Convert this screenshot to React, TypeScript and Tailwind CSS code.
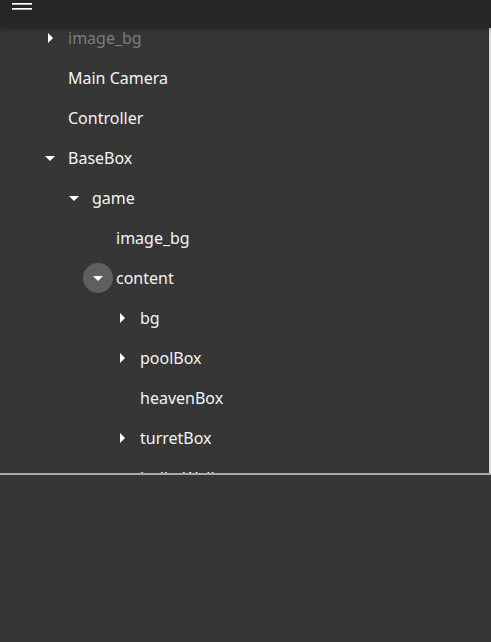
import React from 'react';

type Node = {
  label: string;
  level: number;
  arrow?: 'right' | 'down';
  faded?: boolean;
  active?: boolean;
};

const nodes: Node[] = [
  { label: 'image_bg', level: 0, arrow: 'right', faded: true },
  { label: 'Main Camera', level: 0 },
  { label: 'Controller', level: 0 },
  { label: 'BaseBox', level: 0, arrow: 'down' },
  { label: 'game', level: 1, arrow: 'down' },
  { label: 'image_bg', level: 2 },
  { label: 'content', level: 2, arrow: 'down', active: true },
  { label: 'bg', level: 3, arrow: 'right' },
  { label: 'poolBox', level: 3, arrow: 'right' },
  { label: 'heavenBox', level: 3 },
  { label: 'turretBox', level: 3, arrow: 'right' },
  { label: 'bulletWall', level: 3, arrow: 'right' },
];

const indent = ['pl-[38px]', 'pl-[62px]', 'pl-[86px]', 'pl-[110px]'];

function Arrow({ dir }: { dir: 'right' | 'down' }) {
  return (
    <svg viewBox="0 0 24 24" className="w-6 h-6 relative" fill="currentColor">
      {dir === 'right' ? <path d="M10 17l5-5-5-5v10z" /> : <path d="M7 10l5 5 5-5z" />}
    </svg>
  );
}

function TreeRow({ node }: { node: Node }) {
  return (
    <li className={`flex items-center h-10 ${indent[node.level]}`}>
      <div className="w-6 h-6 flex items-center justify-center shrink-0 text-white">
        {node.active && <div className="w-[30px] h-[30px] shrink-0 rounded-full bg-[#5f5f5f] -mx-[3px] absolute" />}
        {node.arrow && <Arrow dir={node.arrow} />}
      </div>
      <span
        className={`ml-[6px] text-[16px] leading-none ${node.faded ? 'text-[#7c7c7c]' : 'text-[#f4f4f4]'}`}
      >
        {node.label}
      </span>
    </li>
  );
}

export default function App() {
  return (
    <div className="w-[491px] h-[642px] bg-[#363636] overflow-hidden font-['Noto_Sans',sans-serif]">
      {/* Header, scrolled partly out of view */}
      <header className="h-[28px] bg-[#262626] relative z-10 shadow-[0_2px_4px_rgba(0,0,0,0.25)]">
        <svg viewBox="0 0 20 10" className="ml-[12px] w-[20px] h-[10px]" fill="#ffffff">
          <rect x="0" y="3" width="20" height="1.7" />
          <rect x="0" y="8" width="20" height="1.7" />
        </svg>
      </header>

      {/* Tree */}
      <div className="h-[445px] overflow-hidden border-r-2 border-[#dcdcdc]">
        <ul className="-mt-[10px]">
          {nodes.map((n, i) => (
            <TreeRow key={i} node={n} />
          ))}
        </ul>
      </div>

      <div className="h-[2px] bg-[#a9a9a9]" />
    </div>
  );
}
